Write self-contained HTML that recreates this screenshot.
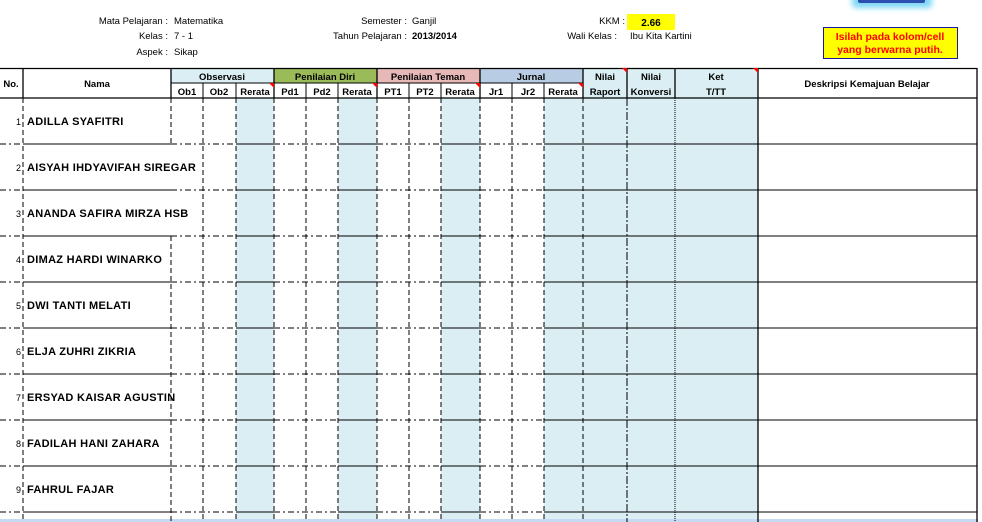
<!DOCTYPE html>
<html><head><meta charset="utf-8"><style>
html,body{margin:0;padding:0;background:#fff;width:982px;height:522px;overflow:hidden;font-family:"Liberation Sans",Arial,sans-serif}
svg{position:absolute;left:0;top:0}
</style></head><body>
<svg width="982" height="522" viewBox="0 0 982 522" xmlns="http://www.w3.org/2000/svg" font-family="Liberation Sans, Arial, sans-serif">
<defs><filter id="g" x="-50%" y="-200%" width="200%" height="500%"><feGaussianBlur stdDeviation="3"/></filter></defs>
<rect x="852" y="-6" width="80" height="14" rx="4" fill="#7fd8f5" filter="url(#g)"/>
<rect x="858" y="-4" width="67" height="7" rx="2" fill="#2a4fb0"/>
<g font-size="9.5" fill="#000">
<text x="168" y="24" text-anchor="end">Mata Pelajaran :</text>
<text x="174" y="24">Matematika</text>
<text x="168" y="39" text-anchor="end">Kelas :</text>
<text x="174" y="39">7 - 1</text>
<text x="168" y="55" text-anchor="end">Aspek :</text>
<text x="174" y="55">Sikap</text>
<text x="407" y="24" text-anchor="end">Semester :</text>
<text x="412" y="24">Ganjil</text>
<text x="407" y="39" text-anchor="end">Tahun Pelajaran :</text>
<text x="412" y="39" font-weight="bold">2013/2014</text>
<text x="625" y="24" text-anchor="end">KKM :</text>
<text x="617" y="39" text-anchor="end">Wali Kelas :</text>
<text x="630" y="39">Ibu Kita Kartini</text>
</g>
<rect x="627" y="14" width="48" height="16" fill="#ffff00"/>
<text x="651" y="26" font-size="10" font-weight="bold" text-anchor="middle">2.66</text>
<rect x="823.5" y="27.5" width="134" height="31" fill="#ffff00" stroke="#1a1aa0" stroke-width="1"/>
<text x="890" y="40" font-size="10.5" font-weight="bold" fill="#ff0000" text-anchor="middle">Isilah pada kolom/cell</text>
<text x="890" y="53" font-size="10.5" font-weight="bold" fill="#ff0000" text-anchor="middle">yang berwarna putih.</text>
<rect x="171" y="68" width="103" height="15" fill="#daeef3"/>
<rect x="274" y="68" width="103" height="15" fill="#9bbb59"/>
<rect x="377" y="68" width="103" height="15" fill="#e6b9b8"/>
<rect x="480" y="68" width="103" height="15" fill="#b8cce4"/>
<rect x="583" y="68" width="175" height="30" fill="#daeef3"/>
<g fill="#daeef3">
<rect x="236" y="98" width="38" height="424"/>
<rect x="338" y="98" width="39" height="424"/>
<rect x="441" y="98" width="39" height="424"/>
<rect x="544" y="98" width="214" height="424"/>
</g>
<rect x="0" y="519" width="978" height="3" fill="#c5d9f1"/>
<g stroke="#000" stroke-width="1.3" fill="none">
<line x1="0" y1="68.5" x2="977" y2="68.5"/>
<line x1="0" y1="98" x2="977" y2="98"/>
<line x1="171" y1="83" x2="583" y2="83" stroke-width="1"/>
<line x1="23" y1="68" x2="23" y2="98"/>
<line x1="171" y1="68" x2="171" y2="98"/>
<line x1="274" y1="68" x2="274" y2="98"/>
<line x1="377" y1="68" x2="377" y2="98"/>
<line x1="480" y1="68" x2="480" y2="98"/>
<line x1="583" y1="68" x2="583" y2="98"/>
<line x1="627" y1="68" x2="627" y2="98"/>
<line x1="675" y1="68" x2="675" y2="98"/>
<line x1="758" y1="68" x2="758" y2="522"/>
<line x1="977" y1="68" x2="977" y2="522"/>
<g stroke-width="1">
<line x1="203" y1="83" x2="203" y2="98"/><line x1="236" y1="83" x2="236" y2="98"/>
<line x1="306" y1="83" x2="306" y2="98"/><line x1="338" y1="83" x2="338" y2="98"/>
<line x1="409" y1="83" x2="409" y2="98"/><line x1="441" y1="83" x2="441" y2="98"/>
<line x1="512" y1="83" x2="512" y2="98"/><line x1="544" y1="83" x2="544" y2="98"/>
</g>
</g>
<g fill="#ff0000">
<polygon points="269,83 274,83 274,88"/><polygon points="372,83 377,83 377,88"/>
<polygon points="475,83 480,83 480,88"/><polygon points="578,83 583,83 583,88"/>
<polygon points="622,68 627,68 627,73"/><polygon points="753,68 758,68 758,73"/>
</g>
<g font-size="9.5" font-weight="bold" text-anchor="middle" fill="#000">
<text x="11" y="87">No.</text><text x="97" y="87">Nama</text>
<text x="222" y="80">Observasi</text><text x="325" y="80">Penilaian Diri</text>
<text x="428" y="80">Penilaian Teman</text><text x="531" y="80">Jurnal</text>
<text x="605" y="80">Nilai</text><text x="651" y="80">Nilai</text><text x="716" y="80">Ket</text>
<text x="605" y="95">Raport</text><text x="651" y="95">Konversi</text><text x="716" y="95">T/TT</text>
<text x="867" y="87">Deskripsi Kemajuan Belajar</text>
<text x="187" y="95">Ob1</text><text x="219" y="95">Ob2</text><text x="255" y="95">Rerata</text>
<text x="290" y="95">Pd1</text><text x="322" y="95">Pd2</text><text x="357" y="95">Rerata</text>
<text x="393" y="95">PT1</text><text x="425" y="95">PT2</text><text x="460" y="95">Rerata</text>
<text x="496" y="95">Jr1</text><text x="528" y="95">Jr2</text><text x="563" y="95">Rerata</text>
</g>
<g stroke="#000" stroke-width="1" stroke-dasharray="5,3" fill="none">
<line x1="23" y1="98" x2="23" y2="522"/>
<line x1="171" y1="98" x2="171" y2="144"/>
<line x1="171" y1="236" x2="171" y2="522"/>
<line x1="203" y1="98" x2="203" y2="522"/><line x1="236" y1="98" x2="236" y2="522"/>
<line x1="274" y1="98" x2="274" y2="522"/><line x1="306" y1="98" x2="306" y2="522"/>
<line x1="338" y1="98" x2="338" y2="522"/><line x1="377" y1="98" x2="377" y2="522"/>
<line x1="409" y1="98" x2="409" y2="522"/><line x1="441" y1="98" x2="441" y2="522"/>
<line x1="480" y1="98" x2="480" y2="522"/><line x1="512" y1="98" x2="512" y2="522"/>
<line x1="544" y1="98" x2="544" y2="522"/><line x1="583" y1="98" x2="583" y2="522"/>
<line x1="627" y1="98" x2="627" y2="522" stroke-dasharray="8,2,2,2"/>
<line x1="675" y1="98" x2="675" y2="522" stroke-dasharray="1,1"/>
</g>
<path fill="none" stroke="#000" stroke-width="1" d="
M23 144H171M236 144H274M338 144H377M441 144H480M544 144H977
M23 190H171M236 190H274M338 190H377M441 190H480M544 190H977
M23 236H171M236 236H274M338 236H377M441 236H480M544 236H977
M23 282H171M236 282H274M338 282H377M441 282H480M544 282H977
M23 328H171M236 328H274M338 328H377M441 328H480M544 328H977
M23 374H171M236 374H274M338 374H377M441 374H480M544 374H977
M23 420H171M236 420H274M338 420H377M441 420H480M544 420H977
M23 466H171M236 466H274M338 466H377M441 466H480M544 466H977
M23 512H171M236 512H274M338 512H377M441 512H480M544 512H977"/>
<path fill="none" stroke="#000" stroke-width="1" stroke-dasharray="6,3,2,3" d="
M0 144H23M171 144H236M274 144H338M377 144H441M480 144H544
M0 190H23M171 190H236M274 190H338M377 190H441M480 190H544
M0 236H23M171 236H236M274 236H338M377 236H441M480 236H544
M0 282H23M171 282H236M274 282H338M377 282H441M480 282H544
M0 328H23M171 328H236M274 328H338M377 328H441M480 328H544
M0 374H23M171 374H236M274 374H338M377 374H441M480 374H544
M0 420H23M171 420H236M274 420H338M377 420H441M480 420H544
M0 466H23M171 466H236M274 466H338M377 466H441M480 466H544
M0 512H23M171 512H236M274 512H338M377 512H441M480 512H544"/>
<g font-size="9" fill="#000" text-anchor="end">
<text x="21" y="125">1</text><text x="21" y="171">2</text><text x="21" y="217">3</text><text x="21" y="263">4</text>
<text x="21" y="309">5</text><text x="21" y="355">6</text><text x="21" y="401">7</text><text x="21" y="447">8</text><text x="21" y="493">9</text>
</g>
<g font-size="11" font-weight="bold" fill="#000" letter-spacing="0.3">
<text x="27" y="125">ADILLA SYAFITRI</text>
<text x="27" y="171">AISYAH IHDYAVIFAH SIREGAR</text>
<text x="27" y="217">ANANDA SAFIRA MIRZA HSB</text>
<text x="27" y="263">DIMAZ HARDI WINARKO</text>
<text x="27" y="309">DWI TANTI MELATI</text>
<text x="27" y="355">ELJA ZUHRI ZIKRIA</text>
<text x="27" y="401">ERSYAD KAISAR AGUSTIN</text>
<text x="27" y="447">FADILAH HANI ZAHARA</text>
<text x="27" y="493">FAHRUL FAJAR</text>
</g>
</svg>
</body></html>
